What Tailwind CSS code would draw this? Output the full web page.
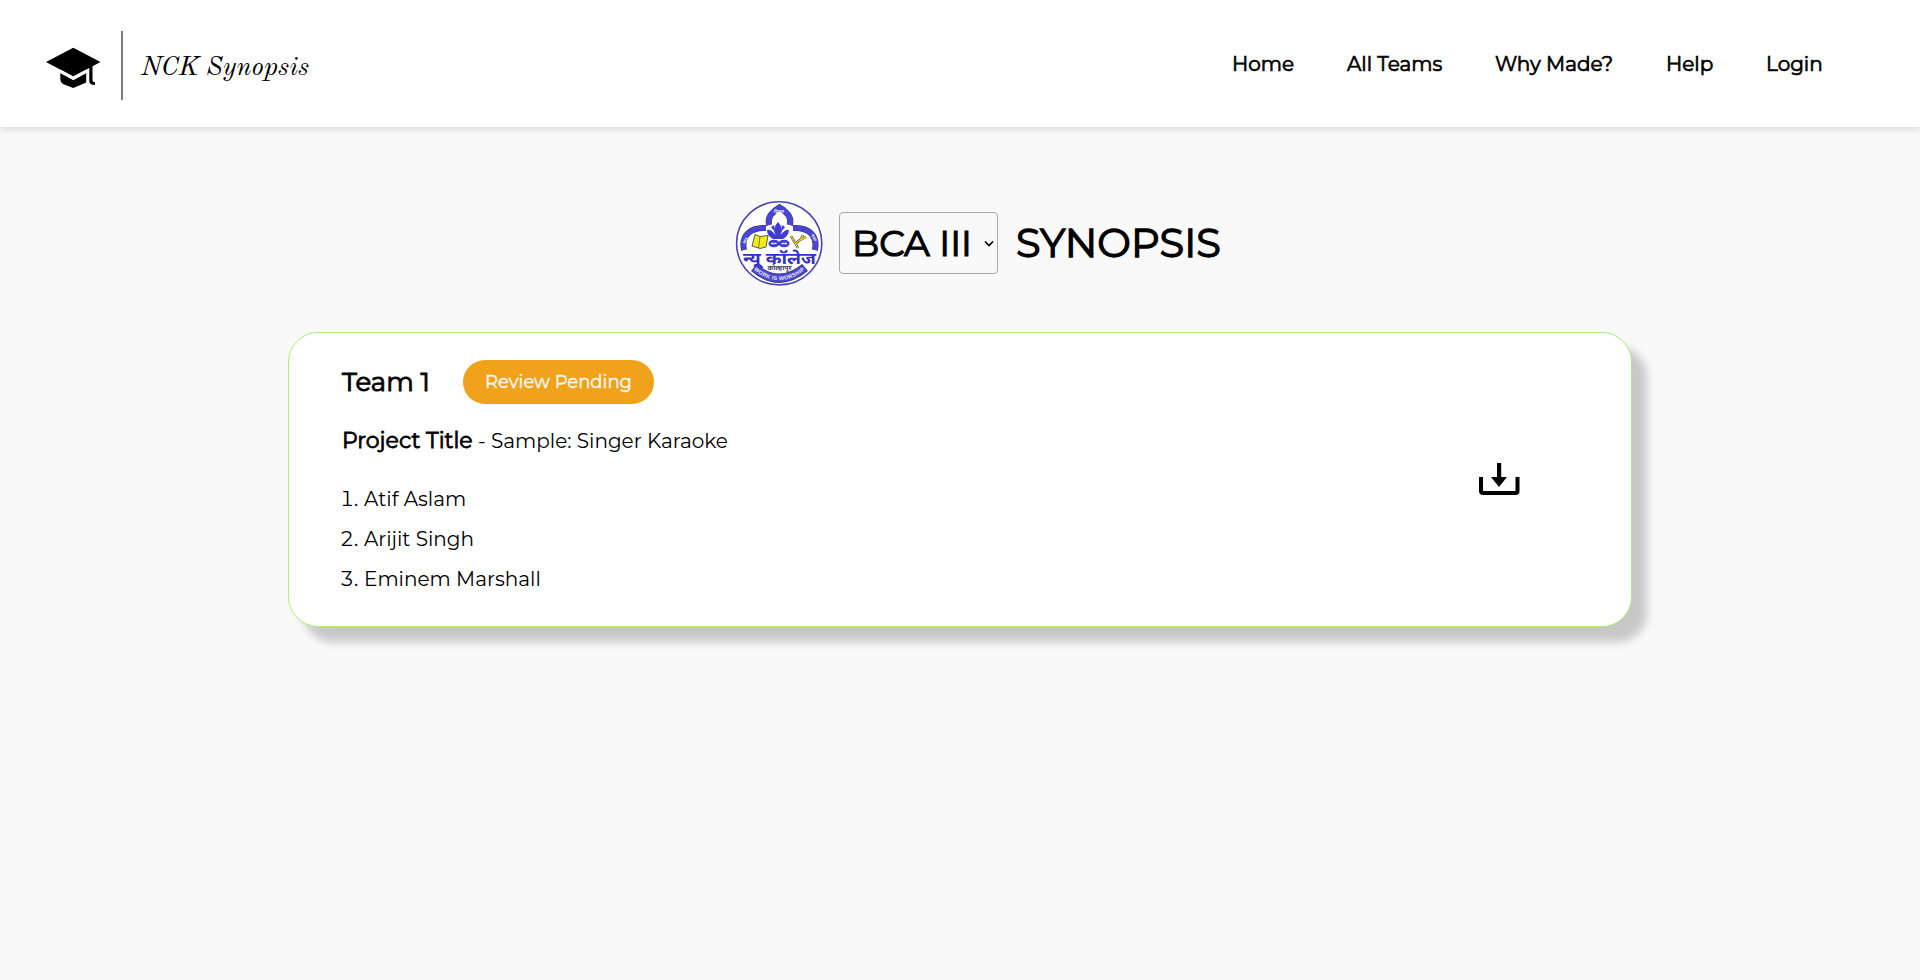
<!DOCTYPE html>
<html lang="en">
<head>
<meta charset="utf-8">
<title>NCK Synopsis</title>
<script src="https://cdn.jsdelivr.net/npm/@tailwindcss/browser@4"></script>
</head>
<body class="min-h-screen bg-[#f9f9f9] font-['Montserrat','Inter',sans-serif] text-black">
<header class="relative flex h-[127px] items-start justify-between bg-white shadow-[0_2px_8px_rgba(0,0,0,0.15)]">
  <div class="flex pl-[46px] pt-[31px]">
    <svg class="mt-4 h-[42px] w-[55px]" viewBox="0 0 55 42" fill="#000"><path d="M27.3.7 54.5 15 27.3 29.5 0 15Z"/><path d="M14.3 26 27.3 33 40.2 26V35.500L27.3 41 17 37Q14.300 35.500 14.300 32Z"/><path d="m14.300 22.500 13 7 13-7v3.500l-13 7-13-7Z" fill="#fff"/><path d="M43.300 19h3.200V33.500q0 1.500 2.500 1.800V38q-5.700-.2-5.700-4Z"/></svg>
    <div class="ml-5 h-[69px] w-[2px] bg-[#7a7a7a]"></div>
    <div class="ml-[18px] mt-[19px] whitespace-nowrap font-['Old_Standard_TT','Liberation_Serif',serif] text-[26.5px] italic leading-9">NCK Synopsis</div>
  </div>
  <nav class="flex pt-[44px] text-[20px] leading-10 whitespace-nowrap [-webkit-text-stroke:0.7px_#000]">
    <a class="w-[115px]">Home</a><a class="w-[148px]">All Teams</a><a class="w-[171px]">Why Made?</a><a class="w-[100px]">Help</a><a class="w-[154px]">Login</a>
  </nav>
</header>
<main>
  <section class="flex h-[205px] items-start pl-[735px] pt-[73px]">
    <svg class="h-[88px] w-[88px]" viewBox="0 0 88 88">
      <ellipse cx="44.200" cy="43.300" rx="42.600" ry="41.600" fill="#fff" stroke="#4a43b8" stroke-width="1.600"/>
      <g fill="none" stroke="#333" stroke-width="6">
        <path d="M34 25C32 17 38 11 44.500 7.500 51 11 57 17 55 25"/>
        <path d="M31 28C15 27 6 36 9 50"/>
        <path d="M58 28c16-1 25 8 22 22"/>
        <path d="M19 67.500Q44 89 70 67.500" stroke-width="9"/>
      </g>
      <g fill="none" stroke="#4845d8" stroke-width="5">
        <path d="M34 25C32 17 38 11 44.500 7.500 51 11 57 17 55 25"/>
        <path d="M31 28C15 27 6 36 9 50"/>
        <path d="M58 28c16-1 25 8 22 22"/>
        <path d="M19 67.500Q44 89 70 67.500" stroke-width="8"/>
      </g>
      <g fill="#3f3ccf">
        <path d="M43 22q6 6 2.500 13 5-6 8.500-5-.5 6-6 9H38q-6-3-6-9 4-1 8.500 5Q37 28 43 22Z"/>
        <path d="m36 27 4 5-1-7Zm14 0-4 5 1-7Z"/>
        <ellipse cx="39" cy="43.500" rx="5.500" ry="3.800"/><ellipse cx="49" cy="43.500" rx="5.500" ry="3.800"/>
      </g>
      <path d="M36 43.500h5.500M46.500 43.500H52" stroke="#ddd" stroke-width="1.400"/>
      <path d="m20 34.500 5 2 8-1-2 11.500-6 1.500-8-2.500Z" fill="#f3ea1c" stroke="#333" stroke-width=".8"/><path d="m25 36.500-1.500 11.500" stroke="#333" stroke-width=".6"/>
      <path d="m56 36 7 12M60 44l6-5 2-4M65 40l6-3" fill="none" stroke="#333" stroke-width="2.400"/><path d="m56 36 7 12M60 44l6-5 2-4M65 40l6-3" fill="none" stroke="#e6d820" stroke-width="1.400"/>
      <g font-family="Noto Sans,sans-serif" font-weight="700"><text x="8" y="63.500" font-size="16.500" fill="#3633c4" textLength="73" lengthAdjust="spacingAndGlyphs">न्यू कॉलेज</text><text x="32.500" y="70" font-size="6" fill="#3a3a6a" textLength="24" lengthAdjust="spacingAndGlyphs">कोल्हापूर</text></g>
      <path id="motto" d="M18 69Q44 91.500 71 69" fill="none"/><text font-family="Liberation Sans" font-size="5.500" font-weight="700" fill="#eee"><textPath href="#motto" startOffset="1" textLength="56">WORK IS WORSHIP</textPath></text>
      <g font-family="Noto Sans" font-size="4" font-weight="700" fill="#eee"><text x="39" y="13">विज्ञान</text><text transform="translate(10 44) rotate(-62)">ज्ञान</text><text transform="translate(76 35) rotate(62)">कला</text></g>
    </svg>
    <div class="ml-4 mt-3 flex h-[62px] w-[159px] items-center justify-between whitespace-nowrap rounded border border-[#a9a9a9] pl-[12px] pr-[3px] text-[36px] [-webkit-text-stroke:1.2px_#000]"><span>BCA III</span><svg class="h-[7px] w-[10px]" viewBox="0 0 10 7"><path d="m1 1.500 4 4 4-4" fill="none" stroke="#000" stroke-width="1.700"/></svg></div>
    <h1 class="ml-[18px] mt-[13px] whitespace-nowrap text-[40px] leading-[60px] [-webkit-text-stroke:1.3px_#000]">SYNOPSIS</h1>
  </section>
  <article class="ml-[288px] flex h-[295px] w-[1344px] justify-between rounded-[30px] border border-[#a6f07c] bg-white pl-[53px] pr-[111px] shadow-[15px_15px_10px_rgba(0,0,0,0.2)]">
    <div class="whitespace-nowrap pt-[27px] text-[20px]">
      <div class="flex h-11 items-center">
        <h2 class="w-[121px] text-[26px] leading-10 [-webkit-text-stroke:0.9px_#000]">Team 1</h2>
        <div class="flex h-11 w-[191px] items-center justify-center rounded-full bg-[#f0a31a] text-[18px] text-[#f9f9f9] [-webkit-text-stroke:0.4px_#f9f9f9]">Review Pending</div>
      </div>
      <p class="mt-[17px] flex h-10 items-baseline leading-10"><b class="w-[136px] text-[22px] font-normal [-webkit-text-stroke:0.8px_#000]">Project Title</b><span>- Sample: Singer Karaoke</span></p>
      <ol class="mt-[18px] leading-10">
        <li class="flex"><span class="-ml-[2px] w-[24px] tabular-nums">1.</span><span>Atif Aslam</span></li>
        <li class="flex"><span class="-ml-[2px] w-[24px] tabular-nums">2.</span><span>Arijit Singh</span></li>
        <li class="flex"><span class="-ml-[2px] w-[24px] tabular-nums">3.</span><span>Eminem Marshall</span></li>
      </ol>
    </div>
    <svg class="mt-[130px] h-[33px] w-[41px]" viewBox="0 0 41 33"><path d="M2 14V28Q2 30 4 30H36.500Q38.500 30 38.500 28V14" fill="none" stroke="#000" stroke-width="4"/><path d="M18 0h4.200v14H28L20 24 12 14h6Z"/></svg>
  </article>
</main>
</body>
</html>
